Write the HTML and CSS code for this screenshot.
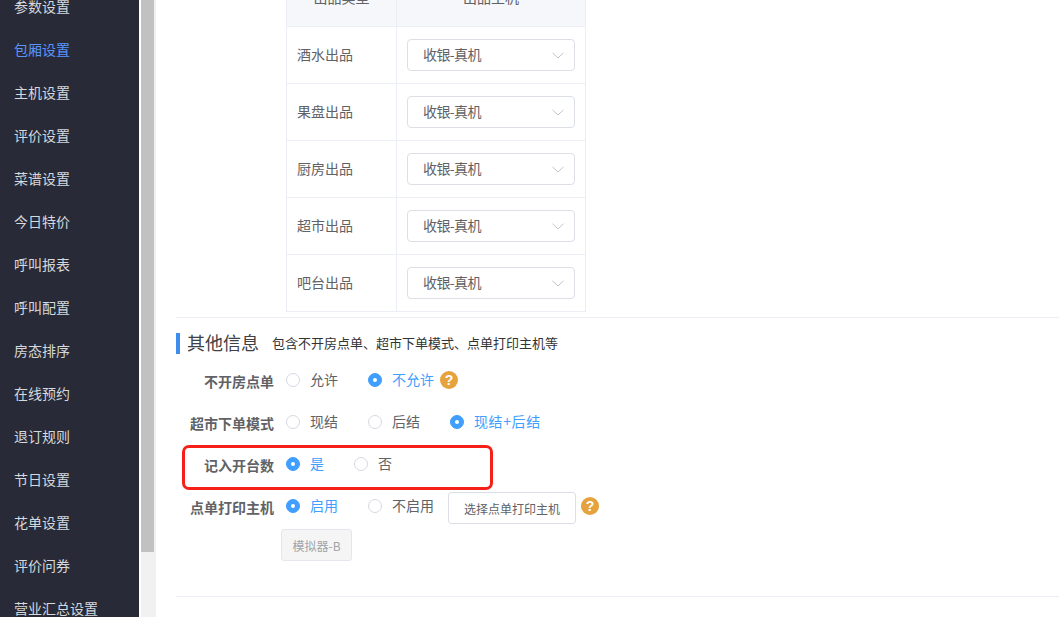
FILE: index.html
```html
<!DOCTYPE html>
<html lang="zh-CN">
<head>
<meta charset="utf-8">
<title>包厢设置</title>
<link rel="stylesheet" href="styles.css">
</head>
<body>
<div class="app">
  <nav class="sidebar">
    <a class="nav-item">参数设置</a>
    <a class="nav-item active">包厢设置</a>
    <a class="nav-item">主机设置</a>
    <a class="nav-item">评价设置</a>
    <a class="nav-item">菜谱设置</a>
    <a class="nav-item">今日特价</a>
    <a class="nav-item">呼叫报表</a>
    <a class="nav-item">呼叫配置</a>
    <a class="nav-item">房态排序</a>
    <a class="nav-item">在线预约</a>
    <a class="nav-item">退订规则</a>
    <a class="nav-item">节日设置</a>
    <a class="nav-item">花单设置</a>
    <a class="nav-item">评价问券</a>
    <a class="nav-item">营业汇总设置</a>
  </nav>
  <div class="scrollbar"><div class="thumb"></div></div>
  <main class="main">
    <div class="table-wrap">
      <table class="print-table">
        <thead>
          <tr><th class="col-type">出品类型</th><th class="col-host">出品主机</th></tr>
        </thead>
        <tbody>
          <tr><td>酒水出品</td><td><div class="select"><span>收银-真机</span><svg class="chev" viewBox="0 0 12 7"><path d="M.5.8 6 6l5.500-5.200"/></svg></div></td></tr>
          <tr><td>果盘出品</td><td><div class="select"><span>收银-真机</span><svg class="chev" viewBox="0 0 12 7"><path d="M.5.8 6 6l5.500-5.200"/></svg></div></td></tr>
          <tr><td>厨房出品</td><td><div class="select"><span>收银-真机</span><svg class="chev" viewBox="0 0 12 7"><path d="M.5.8 6 6l5.500-5.200"/></svg></div></td></tr>
          <tr><td>超市出品</td><td><div class="select"><span>收银-真机</span><svg class="chev" viewBox="0 0 12 7"><path d="M.5.8 6 6l5.500-5.200"/></svg></div></td></tr>
          <tr><td>吧台出品</td><td><div class="select"><span>收银-真机</span><svg class="chev" viewBox="0 0 12 7"><path d="M.5.8 6 6l5.500-5.200"/></svg></div></td></tr>
        </tbody>
      </table>
    </div>
    <section class="other">
      <header class="section-head">
        <h2 class="section-title">其他信息</h2>
        <p class="section-sub">包含不开房点单、超市下单模式、点单打印主机等</p>
      </header>
      <div class="form-row">
        <label class="form-label">不开房点单</label>
        <span class="radio"><i class="dot"></i>允许</span>
        <span class="radio on fit"><i class="dot"></i>不允许</span>
        <span class="help help-inline">?</span>
      </div>
      <div class="form-row">
        <label class="form-label">超市下单模式</label>
        <span class="radio"><i class="dot"></i>现结</span>
        <span class="radio"><i class="dot"></i>后结</span>
        <span class="radio on wide"><i class="dot"></i>现结+后结</span>
      </div>
      <div class="form-row">
        <label class="form-label">记入开台数</label>
        <span class="radio on short"><i class="dot"></i>是</span>
        <span class="radio"><i class="dot"></i>否</span>
        <div class="red-box"></div>
      </div>
      <div class="form-row">
        <label class="form-label">点单打印主机</label>
        <span class="radio on"><i class="dot"></i>启用</span>
        <span class="radio narrow"><i class="dot"></i>不启用</span>
        <button class="btn">选择点单打印主机</button>
        <span class="help help-btn">?</span>
      </div>
      <div class="tag-row"><span class="tag">模拟器-B</span></div>
    </section>
    <div class="bottom-line"></div>
  </main>
</div>
</body>
</html>
```
FILE: styles.css
```css
* { box-sizing: border-box; }
html, body { margin: 0; height: 100%; overflow: hidden; background: #fff; }
body { font-family: "Noto Sans CJK SC", "Liberation Sans", sans-serif; font-size: 14px; color: #606266; }
.app { display: flex; height: 617px; overflow: hidden; }

.sidebar { width: 139px; flex: none; background: #282b37; padding-left: 14px; margin-top: -15px; height: 632px; overflow: hidden; }
.nav-item { display: block; height: 43px; line-height: 43px; color: #d5d8dd; font-size: 14px; white-space: nowrap; }
.nav-item.active { color: #5a94fa; }

.scrollbar { width: 17px; flex: none; height: 617px; background: #f1f1f1; border-left: 2px solid #fff; padding-right: 2px; }
.thumb { width: 13px; height: 552px; background: #c1c1c1; }

.main { flex: 1; min-width: 0; padding-left: 20px; overflow: hidden; }

.table-wrap { margin-top: -31px; padding-left: 110px; height: 349px; border-bottom: 1px solid #ebeef5; }
.print-table { width: 299px; border-collapse: collapse; table-layout: fixed; font-size: 14px; color: #606266; }
.print-table th, .print-table td { border: 1px solid #ebeef5; height: 57px; padding: 0 0 2px; font-weight: 400; }
.print-table th { background: #f5f7fa; text-align: center; }
.print-table td:first-child { padding-left: 10px; }
.print-table td:last-child { padding: 0 0 0 10px; }
.col-type { width: 110px; }
.col-host { width: 189px; }
.select { width: 168px; height: 32px; border: 1px solid #dcdfe6; border-radius: 4px; display: flex; align-items: center; justify-content: space-between; padding: 0 10px 0 15px; background: #fff; }
.select span { letter-spacing: -.6px; margin-top: -2px; }
.chev { width: 12px; height: 7px; }
.chev path { fill: none; stroke: #c0c4cc; stroke-width: 1; }

.other { padding-top: 15px; }
.section-head { display: flex; align-items: center; height: 21px; border-left: 4px solid #3c8dee; padding: 0 0 3px 7px; margin-bottom: 4px; }
.section-title { margin: 0; font-size: 18px; font-weight: 400; color: #3f4146; line-height: 22px; }
.section-sub { margin: 2px 0 0 13px; font-size: 13px; color: #333; line-height: 20px; }

.form-row { display: flex; align-items: center; height: 42px; position: relative; }
.form-label { width: 98px; text-align: right; font-weight: 700; font-size: 14px; color: #606266; margin-right: 12px; padding-top: 4px; white-space: nowrap; }
.radio { width: 82px; display: flex; align-items: center; font-size: 14px; color: #606266; white-space: nowrap; flex: none; }
.radio.short { width: 68px; }
.radio.narrow { width: 80px; }
.radio.fit { width: auto; }
.radio.wide { letter-spacing: .6px; }
.dot { width: 14px; height: 14px; border-radius: 50%; border: 1px solid #d6d9e2; background: #fff; margin: 2px 10px 0 0; flex: none; display: block; }
.radio.on { color: #409eff; }
.radio.on .dot { background: #409eff; border-color: #409eff; position: relative; }
.radio.on .dot::after { content: ""; position: absolute; left: 4px; top: 4px; width: 4px; height: 4px; border-radius: 50%; background: #fff; }

.help { width: 18px; height: 18px; border-radius: 50%; background: #e6a23c; color: #fff; font: 700 14px/18px "Liberation Sans", sans-serif; text-align: center; flex: none; }
.help-inline { margin: 2px 0 0 6px; }
.help-btn { margin: 1px 0 0 5px; }

.btn { width: 128px; height: 32px; margin: 6px 0 0 0; padding: 0; background: #fff; border: 1px solid #dcdfe6; border-radius: 3px; font-family: inherit; font-size: 12px; color: #606266; }

.red-box { position: absolute; left: 6px; top: 3px; width: 311px; height: 45px; border: 3.500px solid #f5201a; border-radius: 7px; pointer-events: none; }

.tag-row { padding: 3px 0 0 105px; }
.tag { display: inline-flex; align-items: center; justify-content: center; width: 71px; height: 32px; background: #f5f5f5; border: 1px solid #e4e7ed; border-radius: 3px; font-size: 12px; color: #a0a3a8; }

.bottom-line { margin-top: 35px; border-top: 1px solid #ebeef5; }
```
